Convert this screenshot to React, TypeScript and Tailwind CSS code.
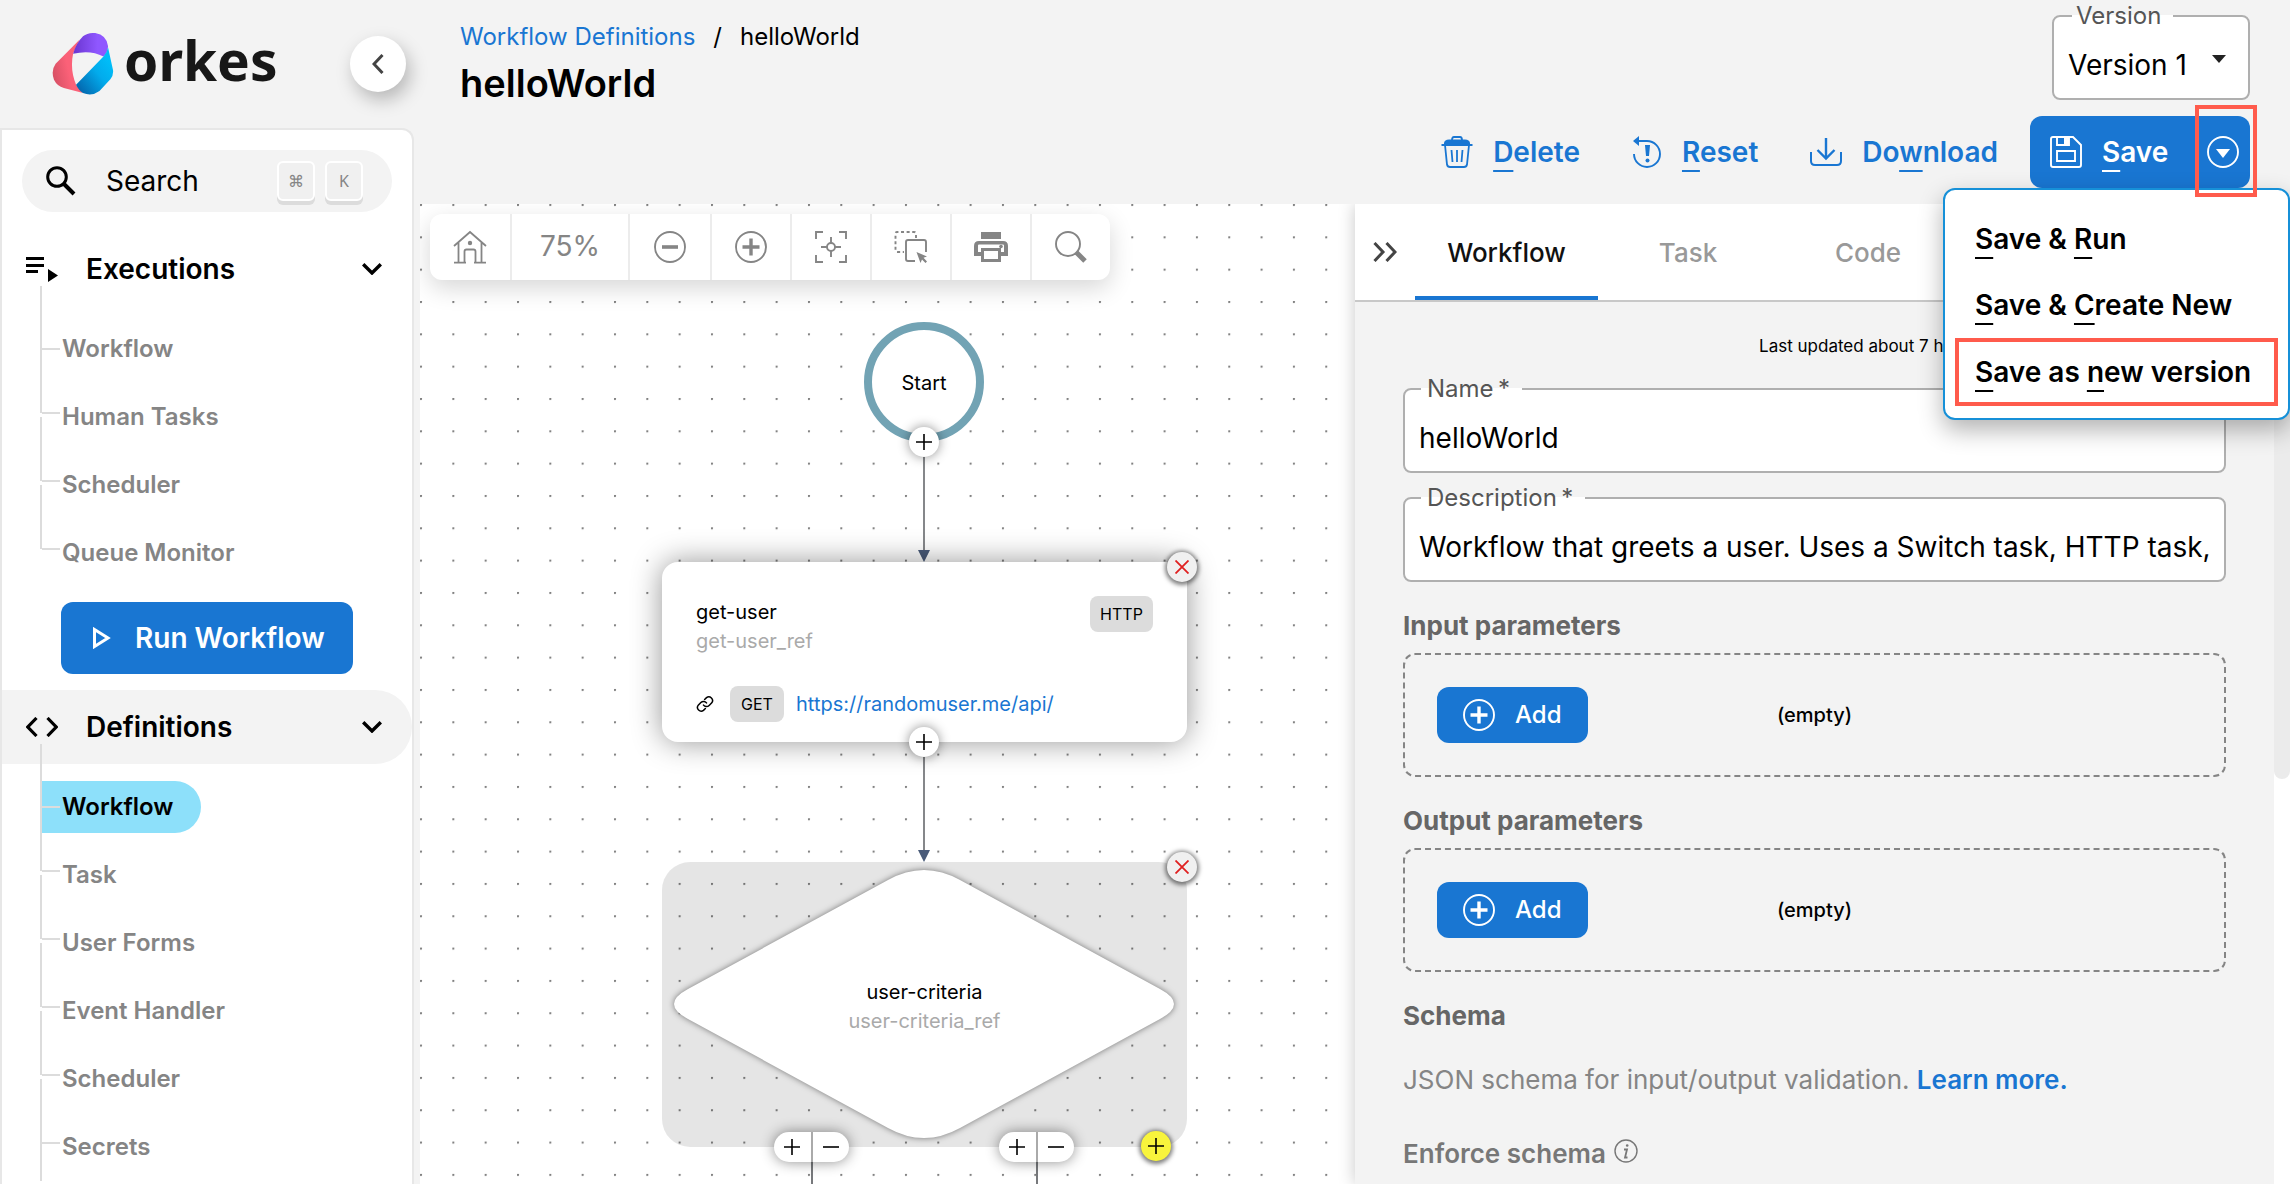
import React from "react";

type IconProps = { className?: string };

/* ---------- icons ---------- */

function OrkesMark() {
  return (
    <svg viewBox="35 38 186 188" className="h-[62px] w-[62px] shrink-0" aria-hidden="true">
      <defs>
        <linearGradient id="markRed" x1="0" y1="1" x2="1" y2="0.6">
          <stop offset="0" stopColor="#cf4c60" />
          <stop offset="0.6" stopColor="#fb6178" />
        </linearGradient>
        <linearGradient id="markPurple" x1="0" y1="0" x2="1" y2="0">
          <stop offset="0" stopColor="#6a35d0" />
          <stop offset="0.7" stopColor="#8f57ff" />
        </linearGradient>
        <linearGradient id="markBlue" x1="0.2" y1="1" x2="0.9" y2="0.3">
          <stop offset="0" stopColor="#0369b0" />
          <stop offset="0.6" stopColor="#02abec" />
          <stop offset="1" stopColor="#00bdf8" />
        </linearGradient>
      </defs>
      <path d="M118 58L45 131Q30 152 40 180Q50 200 70 205L128 220L107 195Q88 150 98 100Z" fill="url(#markRed)" />
      <path d="M98 101Q108 68 128 48Q142 37 165 38Q200 44 204 78Q203 98 190 109Q150 88 98 101Z" fill="url(#markPurple)" />
      <path d="M204 82L219 150Q221 166 211 178L178 214Q155 231 128 220Q115 212 107 195L190 109Q201 98 204 82Z" fill="url(#markBlue)" />
    </svg>
  );
}

function SearchIcon({ className }: IconProps) {
  return (
    <svg viewBox="0 0 30 30" className={className} fill="none" stroke="currentColor" aria-hidden="true">
      <circle cx="11" cy="11" r="9.3" strokeWidth="3" />
      <path d="M17.5 17.5L28 28" strokeWidth="4" />
    </svg>
  );
}

function ChevronDown() {
  return (
    <svg viewBox="0 0 20 12" className="h-3 w-5" fill="none" stroke="currentColor" strokeWidth="3.4" aria-hidden="true">
      <path d="M1.2 1.2L10 10L18.8 1.2" />
    </svg>
  );
}

function ExecutionsIcon() {
  return (
    <svg viewBox="0 0 32 26" className="h-[26px] w-8" aria-hidden="true">
      <path d="M0 1h18v3H0zM0 8h18v3H0zM0 14h12v3H0zM22 13l10 6.5L22 26z" fill="currentColor" />
    </svg>
  );
}

function CodeIcon() {
  return (
    <svg viewBox="0 0 32 20" className="h-5 w-8" fill="none" stroke="currentColor" strokeWidth="3.2" aria-hidden="true">
      <path d="M10.5 1L1.8 10L10.5 19M21.5 1L30.2 10L21.5 19" />
    </svg>
  );
}

function HomeIcon() {
  return (
    <svg viewBox="0 0 34 34" className="h-[34px] w-[34px]" fill="none" stroke="currentColor" strokeWidth="1.8" aria-hidden="true">
      <path d="M1 16L17 2L33 16M5.5 12.5V32M28.5 12.5V32M1 32.6H13M21 32.6H33M11.5 32.6V21.5Q11.5 19.5 13.5 19.5H20.5Q22.5 19.5 22.5 21.5V32.6" />
      <circle cx="17" cy="13" r="2.2" fill="currentColor" stroke="none" />
    </svg>
  );
}

function ZoomOutIcon() {
  return (
    <svg viewBox="0 0 32 32" className="h-8 w-8" fill="none" stroke="currentColor" aria-hidden="true">
      <circle cx="16" cy="16" r="15" strokeWidth="1.9" />
      <path d="M8 16H24" strokeWidth="3.6" />
    </svg>
  );
}

function PlusCircleIcon() {
  return (
    <svg viewBox="0 0 32 32" className="h-8 w-8" fill="none" stroke="currentColor" aria-hidden="true">
      <circle cx="16" cy="16" r="15" strokeWidth="1.9" />
      <path d="M7.5 16H24.5M16 7.5V24.5" strokeWidth="3.4" />
    </svg>
  );
}

function FocusIcon() {
  return (
    <svg viewBox="0 0 32 32" className="h-8 w-8" fill="none" stroke="currentColor" strokeWidth="1.9" aria-hidden="true">
      <path d="M1 8V1H8M24 1H31V8M31 24V31H24M8 31H1V24M16 6V12M16 20V26M6 16H12M20 16H26" />
      <circle cx="16" cy="16" r="4" />
    </svg>
  );
}

function SelectAreaIcon() {
  return (
    <svg viewBox="0 0 34 34" className="h-[34px] w-[34px]" fill="none" stroke="currentColor" strokeWidth="1.9" aria-hidden="true">
      <path d="M22 8V4Q22 2 20 2H3Q1.500 2 1.500 4V20Q1.500 22 3.500 22H10" strokeDasharray="3 2.600" />
      <path d="M21 31H14Q12 31 12 29V12Q12 10 14 10H30Q32 10 32 12V22" />
      <path d="M22.500 22L33 26.500L29.500 27.800L33 31.500L31.500 33L28 29.500L26.500 33Z" fill="currentColor" stroke="none" />
    </svg>
  );
}

function PrintIcon() {
  return (
    <svg viewBox="0 0 34 32" className="h-8 w-[34px]" aria-hidden="true">
      <path
        fill="currentColor"
        fillRule="evenodd"
        d="M7 1H27V8H7ZM5 10H29Q34 10 34 15V25H27V31H7V25H0V15Q0 10 5 10ZM10 20V28H24V20ZM4 21H7V17H27V21H30V14.500Q30 13.500 29 13.500H5Q4 13.500 4 14.500Z"
      />
      <circle cx="27" cy="15.500" r="1.800" fill="currentColor" />
    </svg>
  );
}

function MagnifierIcon() {
  return (
    <svg viewBox="0 0 32 32" className="h-8 w-8" fill="none" stroke="currentColor" aria-hidden="true">
      <circle cx="13" cy="13" r="12" strokeWidth="1.9" />
      <path d="M21.500 21.500L30 30" strokeWidth="5" />
    </svg>
  );
}

function TrashIcon() {
  return (
    <svg viewBox="0 0 32 32" className="h-8 w-8" fill="none" stroke="currentColor" strokeWidth="1.8" aria-hidden="true">
      <path d="M3 9V7Q3.500 3.500 8 3.500H24Q28.500 3.500 29 7V9.500H3Z" fill="currentColor" stroke="none" />
      <path d="M11 4Q11 1 13 1H19Q21 1 21 4M0.500 9H31.500M4 9L6 28.500Q6.500 31 9 31H23Q25.500 31 26 28.500L28 9M10.500 14L11.500 26M16 14V26M21.500 14L20.500 26" />
    </svg>
  );
}

function ResetIcon() {
  return (
    <svg viewBox="0 0 30 32" className="h-8 w-[30px]" fill="none" stroke="currentColor" aria-hidden="true">
      <path d="M4 5H15A13 13 0 1 1 2 18" strokeWidth="1.9" />
      <path d="M1 5L7 0V10Z" fill="currentColor" stroke="none" />
      <path d="M13 9H18L17 20H14Z" fill="currentColor" stroke="none" />
      <circle cx="15.500" cy="24.500" r="2" fill="currentColor" stroke="none" />
    </svg>
  );
}

function DownloadIcon() {
  return (
    <svg viewBox="0 0 32 32" className="h-8 w-8" fill="none" stroke="currentColor" strokeWidth="2" aria-hidden="true">
      <path d="M1 16V25Q1 29 5 29H27Q31 29 31 25V16" />
      <path d="M16 2V22M7.500 14L16 22.500L24.500 14" strokeWidth="2.400" />
    </svg>
  );
}

function SaveIcon() {
  return (
    <svg viewBox="0 0 32 32" className="h-8 w-8" fill="none" stroke="currentColor" strokeWidth="1.900" aria-hidden="true">
      <path d="M3 1H23L31 9V29Q31 31 29 31H3Q1 31 1 29V3Q1 1 3 1Z" />
      <path d="M7 1V9H19V1M7 15H25V25H7Z" />
      <path d="M14 1H19V9H14Z" fill="currentColor" stroke="none" />
    </svg>
  );
}

function CaretCircleIcon() {
  return (
    <svg viewBox="0 0 32 32" className="h-8 w-8" fill="none" stroke="currentColor" strokeWidth="1.900" aria-hidden="true">
      <circle cx="16" cy="16" r="15" />
      <path d="M9 13H23L16 22Z" fill="currentColor" stroke="none" />
    </svg>
  );
}

function LinkIcon() {
  return (
    <svg viewBox="0 0 24 24" className="h-[18px] w-[18px] shrink-0" fill="none" stroke="currentColor" strokeWidth="2" strokeLinecap="round" aria-hidden="true">
      <path d="M10 13.500a5 5 0 0 0 7.500.5l3.500-3.500a5 5 0 0 0-7-7L11.500 6" />
      <path d="M14 10.500a5 5 0 0 0-7.500-.5L3 13.500a5 5 0 0 0 7 7L12.500 18" />
    </svg>
  );
}

function PlusGlyph() {
  return (
    <svg viewBox="0 0 16 16" className="h-4 w-4" stroke="currentColor" strokeWidth="1.600" aria-hidden="true">
      <path d="M0 8H16M8 0V16" />
    </svg>
  );
}

function MinusGlyph() {
  return (
    <svg viewBox="0 0 16 16" className="h-4 w-4" stroke="currentColor" strokeWidth="1.600" aria-hidden="true">
      <path d="M0 8H16" />
    </svg>
  );
}

/* ---------- sidebar ---------- */

function KeyCap({ children }: { children: React.ReactNode }) {
  return (
    <kbd className="flex h-10 w-[38px] items-center justify-center rounded-md border-2 border-white bg-[#f0f0f0] font-sans text-base text-[#858585] shadow-[0_4px_0_#dcdcdc]">
      {children}
    </kbd>
  );
}

function NavHeader({ icon, label, active }: { icon: React.ReactNode; label: string; active?: boolean }) {
  return (
    <button
      type="button"
      aria-expanded="true"
      className={
        active
          ? "flex h-[74px] w-full shrink-0 items-center rounded-r-full bg-[#f3f3f3] pr-[30px] pl-6 text-[28px] font-semibold"
          : "flex h-[74px] w-full shrink-0 items-center rounded-r-full pr-[30px] pl-6 text-[28px] font-semibold"
      }
    >
      <span className="w-[60px]">{icon}</span>
      <span className="flex-1 text-left">{label}</span>
      <ChevronDown />
    </button>
  );
}

function NavTree({ items, active, open }: { items: string[]; active?: string; open?: boolean }) {
  return (
    <ul className="pt-[9px] pl-[38px]">
      {items.map((item, i) => (
        <li key={item} className="relative flex h-[68px] items-center">
          <span
            className={
              i === 0
                ? "absolute -top-[29px] left-0 h-[64px] w-0.5 bg-[#dcdcdc]"
                : i === items.length - 1 && open
                  ? "absolute -top-[34px] left-0 h-[102px] w-0.5 bg-[#dcdcdc]"
                  : "absolute -top-[34px] left-0 h-16 w-0.5 bg-[#dcdcdc]"
            }
          />
          <a
            href="#"
            className={
              item === active
                ? "ml-0.5 flex h-[52px] items-center rounded-r-full bg-[#8de0fa] pr-7 text-2xl font-semibold text-black"
                : "ml-0.5 flex h-[52px] items-center pr-7 text-2xl font-semibold text-[#858585]"
            }
          >
            <span className={i === 0 ? "mr-0.5 h-0.5 w-[18px] bg-[#dcdcdc]" : "mr-0.5 mb-2 h-0.5 w-[18px] bg-[#dcdcdc]"} />
            {item}
          </a>
        </li>
      ))}
    </ul>
  );
}

function Sidebar() {
  return (
    <aside className="flex w-[414px] shrink-0 flex-col">
      <div className="flex h-32 shrink-0 items-center pr-2 pl-[52px]">
        <a href="#" className="flex items-center gap-2.5 font-['Noto_Sans'] text-[55px] leading-[62px] font-bold text-[#171717]">
          <OrkesMark />
          <span className="pb-2">orkes</span>
        </a>
        <button
          type="button"
          aria-label="Collapse menu"
          className="ml-auto flex h-14 w-14 items-center justify-center rounded-full bg-white text-[#444] shadow-[4px_8px_18px_rgba(0,0,0,0.25)]"
        >
          <svg viewBox="0 0 12 20" className="h-5 w-3" fill="none" stroke="currentColor" strokeWidth="3" aria-hidden="true">
            <path d="M10.500 1L2 10L10.500 19" />
          </svg>
        </button>
      </div>
      <nav className="flex min-h-0 flex-1 flex-col overflow-hidden rounded-tr-xl border-2 border-b-0 border-[#e7e7e7] bg-white pt-5">
        <button
          type="button"
          className="mx-5 flex h-[62px] shrink-0 items-center gap-2.5 rounded-full bg-[#f3f3f3] pr-[29px] pl-6 text-[28px]"
        >
          <SearchIcon className="h-[30px] w-[30px]" />
          <span className="flex-1 pl-5 text-left">Search</span>
          <KeyCap>⌘</KeyCap>
          <KeyCap>K</KeyCap>
        </button>
        <div className="h-5 shrink-0" />
        <NavHeader icon={<ExecutionsIcon />} label="Executions" />
        <NavTree items={["Workflow", "Human Tasks", "Scheduler", "Queue Monitor"]} />
        <button
          type="button"
          className="mt-[15px] mb-4 ml-[59px] flex h-[72px] w-[292px] shrink-0 items-center rounded-xl bg-[#1976d2] pl-8 text-[28px] font-semibold text-white"
        >
          <svg viewBox="0 0 18 22" className="mr-6 h-[22px] w-[18px]" fill="none" stroke="currentColor" strokeWidth="3" aria-hidden="true">
            <path d="M1.500 2.500L15 11L1.500 19.500Z" />
          </svg>
          Run Workflow
        </button>
        <NavHeader icon={<CodeIcon />} label="Definitions" active />
        <NavTree
          items={["Workflow", "Task", "User Forms", "Event Handler", "Scheduler", "Secrets"]}
          active="Workflow"
          open
        />
      </nav>
    </aside>
  );
}

/* ---------- header ---------- */

function Key({ children }: { children: React.ReactNode }) {
  return <span className="underline decoration-2 underline-offset-8 [text-decoration-skip-ink:none]">{children}</span>;
}

function ActionButton({ icon, children }: { icon: React.ReactNode; children: React.ReactNode }) {
  return (
    <button type="button" className="flex items-center gap-5 text-[28px] font-semibold text-[#1976d2]">
      {icon}
      <span>{children}</span>
    </button>
  );
}

function SaveMenu() {
  return (
    <div
      role="menu"
      className="absolute top-full -right-10 z-20 w-[347px] rounded-xl border-2 border-[#1690d8] bg-white px-[10px] pt-4 pb-3 text-[28px] font-semibold shadow-[0_10px_24px_rgba(0,0,0,0.3)]"
    >
      <button type="button" role="menuitem" className="flex h-[66px] w-full items-center px-5">
        <span><Key>S</Key>ave &amp; <Key>R</Key>un</span>
      </button>
      <button type="button" role="menuitem" className="flex h-[66px] w-full items-center px-5">
        <span><Key>S</Key>ave &amp; <Key>C</Key>reate New</span>
      </button>
      <button type="button" role="menuitem" className="flex h-[68px] w-full items-center border-4 border-[#ff5b4c] px-4 whitespace-nowrap">
        <span><Key>S</Key>ave as <Key>n</Key>ew version</span>
      </button>
    </div>
  );
}

function Header() {
  return (
    <header className="flex h-[204px] shrink-0 justify-between pr-10 pl-10">
      <div className="pt-[19px]">
        <nav aria-label="Breadcrumb" className="flex h-9 items-center gap-[18px] text-2xl">
          <a href="#" className="text-[#1976d2]">Workflow Definitions</a>
          <span>/</span>
          <span>helloWorld</span>
        </nav>
        <h1 className="mt-1 text-[38px] leading-[48px] font-semibold">helloWorld</h1>
      </div>
      <div className="flex flex-col items-end">
        <fieldset className="h-[100px] w-[198px] rounded-lg border-2 border-[#afafaf] bg-white px-[14px]">
          <legend className="ml-1 h-8 pr-3 pl-1 text-2xl text-[#555]">
            <label htmlFor="version">Version</label>
          </legend>
          <div className="relative flex h-[66px] items-center">
            <select id="version" className="w-full appearance-none bg-transparent text-[28px]">
              <option>Version 1</option>
            </select>
            <svg viewBox="0 0 14 8" className="pointer-events-none absolute top-[23px] right-2 h-2 w-3.5" aria-hidden="true">
              <path d="M0 0H14L7 8Z" fill="#222" />
            </svg>
          </div>
        </fieldset>
        <div className="mt-4 flex items-center">
          <div className="mr-8 flex items-center gap-[52px]">
            <ActionButton icon={<TrashIcon />}><Key>D</Key>elete</ActionButton>
            <ActionButton icon={<ResetIcon />}><Key>R</Key>eset</ActionButton>
            <ActionButton icon={<DownloadIcon />}>Do<Key>w</Key>nload</ActionButton>
          </div>
          <div className="relative flex h-[72px] w-[220px] rounded-xl bg-[#1976d2] text-white">
            <button type="button" className="flex flex-1 items-center gap-5 pl-5 text-[28px] font-semibold">
              <SaveIcon />
              <span><Key>S</Key>ave</span>
            </button>
            <button type="button" aria-label="More save options" aria-expanded="true" className="flex w-[55px] items-center justify-center border-l border-[#1259a5]">
              <CaretCircleIcon />
            </button>
            <div className="text-black"><SaveMenu /></div>
            <span className="pointer-events-none absolute -top-[11px] -right-[7px] z-30 h-[92px] w-[62px] border-4 border-[#ff5b4c]" />
          </div>
        </div>
      </div>
    </header>
  );
}

/* ---------- canvas ---------- */

function CanvasBackdrop() {
  return (
    <svg className="absolute inset-0 h-full w-full" aria-hidden="true">
      <defs>
        <pattern id="dots" width="32.33" height="32.33" patternUnits="userSpaceOnUse">
          <circle cx="1" cy="1" r="1.1" fill="#777" />
        </pattern>
      </defs>
      <rect width="100%" height="100%" fill="url(#dots)" />
      <g stroke="#85878a" strokeWidth="2">
        <path d="M504 250V350M504 540V650" />
      </g>
      <path d="M498 346H510L504 358ZM498 646H510L504 658Z" fill="#4a5b79" />
    </svg>
  );
}

const nodeButton = "absolute flex h-[30px] w-[30px] items-center justify-center rounded-full";

function RemoveButton({ className, label }: { className: string; label: string }) {
  return (
    <button type="button" aria-label={label} className={className}>
      <svg viewBox="0 0 14 14" className="h-3.5 w-3.5" stroke="#e01f1f" strokeWidth="1.800" aria-hidden="true">
        <path d="M0.500 0.500L13.500 13.500M13.500 0.500L0.500 13.500" />
      </svg>
    </button>
  );
}

function BranchPill({ className }: { className: string }) {
  return (
    <div className={className}>
      <button type="button" aria-label="Add task to branch" className="flex flex-1 items-center justify-center"><PlusGlyph /></button>
      <span className="h-full w-0.5 bg-[#aaa]" />
      <button type="button" aria-label="Remove branch" className="flex flex-1 items-center justify-center"><MinusGlyph /></button>
    </div>
  );
}

function Toolbar() {
  const cell = "flex items-center justify-center border-r-2 border-[#ececec] w-20";
  return (
    <div className="absolute top-[10px] left-[10px] flex h-[66px] rounded-xl bg-white text-[#858585] shadow-[0_8px_24px_rgba(0,0,0,0.16)]">
      <button type="button" aria-label="Home" className="flex w-[82px] items-center justify-center border-r-2 border-[#ececec]"><HomeIcon /></button>
      <span className="flex w-[118px] items-center justify-center border-r-2 border-[#ececec] text-[28px]">75%</span>
      <button type="button" aria-label="Zoom out" className="flex w-[82px] items-center justify-center border-r-2 border-[#ececec]"><ZoomOutIcon /></button>
      <button type="button" aria-label="Zoom in" className={cell}><PlusCircleIcon /></button>
      <button type="button" aria-label="Fit to screen" className={cell}><FocusIcon /></button>
      <button type="button" aria-label="Select area" className={cell}><SelectAreaIcon /></button>
      <button type="button" aria-label="Print" className={cell}><PrintIcon /></button>
      <button type="button" aria-label="Find" className="flex w-[78px] items-center justify-center"><MagnifierIcon /></button>
    </div>
  );
}

function Canvas() {
  return (
    <section aria-label="Workflow diagram" className="relative min-w-0 flex-1 overflow-hidden bg-white text-xl">
      <CanvasBackdrop />

      <div className="absolute top-[118px] left-[444px] flex h-[120px] w-[120px] items-center justify-center rounded-full border-8 border-[#72a3b4] bg-white pt-0.5">
        Start
      </div>
      <button type="button" aria-label="Add task after start" className={`${nodeButton} top-[223px] left-[489px] bg-white shadow-[0_0_12px_rgba(0,0,0,0.45)]`}><PlusGlyph /></button>

      <article className="absolute top-[358px] left-[242px] h-[180px] w-[525px] rounded-2xl bg-white px-[34px] shadow-[0_0_30px_rgba(0,0,0,0.42)]">
        <div className="flex justify-between pt-[34px]">
          <div className="pt-0.5">
            <div className="leading-[29px]">get-user</div>
            <div className="leading-[29px] text-[#aaa]">get-user_ref</div>
          </div>
          <span className="flex h-9 w-[63px] items-center justify-center rounded-lg bg-[#dcdcdc] text-base">HTTP</span>
        </div>
        <div className="mt-[30px] flex items-center">
          <LinkIcon />
          <span className="ml-4 flex h-9 w-[54px] items-center justify-center rounded-lg bg-[#dcdcdc] text-base">GET</span>
          <a href="#" className="ml-3 text-[#1976d2]">https://randomuser.me/api/</a>
        </div>
      </article>
      <RemoveButton label="Remove get-user" className={`${nodeButton} top-[348px] left-[747px] bg-[#f0f0f0] shadow-[0_1px_4px_2px_rgba(0,0,0,0.5)]`} />
      <button type="button" aria-label="Add task after get-user" className={`${nodeButton} top-[523px] left-[489px] bg-white shadow-[0_0_12px_rgba(0,0,0,0.45)]`}><PlusGlyph /></button>

      <div className="absolute top-[658px] left-[242px] h-[285px] w-[525px] rounded-[28px] bg-black/10">
        <svg viewBox="242 658 525 285" className="absolute inset-0 h-full w-full overflow-visible" aria-hidden="true">
          <path
            d="M468 676Q504 656 540 676L740 785Q768 800 740 815L540 924Q504 944 468 924L268 815Q240 800 268 785Z"
            fill="#fff"
            className="drop-shadow-[0_0_3px_rgba(0,0,0,0.5)]"
          />
        </svg>
        <div className="relative flex h-full flex-col items-center justify-center pt-1">
          <div className="leading-[29px]">user-criteria</div>
          <div className="leading-[29px] text-[#aaa]">user-criteria_ref</div>
        </div>
      </div>
      <RemoveButton label="Remove user-criteria" className={`${nodeButton} top-[648px] left-[747px] bg-[#f0f0f0] shadow-[0_1px_4px_2px_rgba(0,0,0,0.5)]`} />

      <span className="absolute top-[958px] bottom-0 left-[391px] w-0.5 bg-[#77797c]" />
      <span className="absolute top-[958px] bottom-0 left-[616px] w-0.5 bg-[#77797c]" />
      <BranchPill className="absolute top-[928px] left-[354px] flex h-[30px] w-[75px] rounded-full bg-white shadow-[0_0_14px_rgba(0,0,0,0.45)]" />
      <BranchPill className="absolute top-[928px] left-[579px] flex h-[30px] w-[75px] rounded-full bg-white shadow-[0_0_14px_rgba(0,0,0,0.45)]" />
      <button type="button" aria-label="Add branch" className={`${nodeButton} top-[927px] left-[721px] bg-[#f8f43c] shadow-[0_1px_4px_2px_rgba(0,0,0,0.5)]`}><PlusGlyph /></button>

      <Toolbar />
    </section>
  );
}

/* ---------- details panel ---------- */

function TextField({ id, label, value }: { id: string; label: string; value: string }) {
  return (
    <fieldset className="h-[100px] min-w-0 rounded-lg border-2 border-[#afafaf] bg-white px-[14px]">
      <legend className="ml-0.5 h-8 pr-3 pl-1.5 text-2xl text-[#555]">
        <label htmlFor={id}>{label}{"\u2009"}*</label>
      </legend>
      <input id={id} type="text" defaultValue={value} className="h-[66px] w-full bg-transparent text-[28px] outline-none" />
    </fieldset>
  );
}

function Parameters({ title }: { title: string }) {
  return (
    <section>
      <h2 className="h-10 text-[26px] leading-10 font-bold text-[#666]">{title}</h2>
      <div className="mt-[7px] grid h-[124px] grid-cols-[1fr_auto_1fr] items-center rounded-xl border-2 border-dashed border-[#858585] px-8">
        <button type="button" className="flex h-14 w-[151px] items-center gap-5 rounded-xl bg-[#1976d2] pl-[26px] text-2xl font-medium text-white">
          <PlusCircleIcon />
          Add
        </button>
        <span className="text-xl font-medium">(empty)</span>
      </div>
    </section>
  );
}

function DetailsPanel() {
  return (
    <section aria-label="Workflow details" className="relative flex min-w-0 flex-1 flex-col bg-[#f3f3f3] shadow-[0_0_16px_rgba(0,0,0,0.22)]">
      <div className="flex h-[98px] shrink-0 border-b-2 border-[#c8c8c8] bg-white">
        <button type="button" aria-label="Collapse panel" className="flex w-[60px] items-center pl-[18px] text-[#444]">
          <svg viewBox="0 0 24 20" className="h-5 w-6" fill="none" stroke="currentColor" strokeWidth="3" aria-hidden="true">
            <path d="M1.500 1L10 10L1.500 19M13.500 1L22 10L13.500 19" />
          </svg>
        </button>
        <div role="tablist" className="flex text-[26px] font-medium text-[#999]">
          <button type="button" role="tab" aria-selected="true" className="w-[183px] border-b-4 border-[#1976d2] pt-1 text-[#111]">Workflow</button>
          <button type="button" role="tab" aria-selected="false" className="w-[180px]">Task</button>
          <button type="button" role="tab" aria-selected="false" className="w-[180px]">Code</button>
        </div>
      </div>
      <div className="flex min-h-0 flex-1">
        <div className="min-w-0 flex-1 overflow-hidden pr-12 pl-12">
          <p className="mt-8 mr-[212px] h-6 text-right text-[17px] leading-6">Last updated about 7 hours ago</p>
          <div className="mt-[15px] flex flex-col gap-[9px]">
            <TextField id="name" label="Name" value="helloWorld" />
            <TextField id="description" label="Description" value="Workflow that greets a user. Uses a Switch task, HTTP task, and a JSON transform." />
          </div>
          <div className="mt-6 flex flex-col gap-6">
            <Parameters title="Input parameters" />
            <Parameters title="Output parameters" />
          </div>
          <h2 className="mt-6 h-10 text-[26px] leading-10 font-bold text-[#666]">Schema</h2>
          <p className="mt-6 h-10 text-[26px] leading-10 text-[#858585]">
            JSON schema for input/output validation.{" "}
            <a href="#" className="font-semibold text-[#1976d2]">Learn more.</a>
          </p>
          <h2 className="mt-[34px] flex h-10 gap-2 text-[26px] leading-10 font-semibold text-[#777]">
            Enforce schema
            <svg viewBox="0 0 24 24" className="mt-[5px] h-6 w-6" fill="none" stroke="currentColor" strokeWidth="1.400" aria-hidden="true">
              <circle cx="12" cy="12" r="11" />
              <path d="M10 10.500H13L11 18.500H13.500" strokeWidth="1.800" />
              <circle cx="13.200" cy="6.500" r="1.300" fill="currentColor" stroke="none" />
            </svg>
          </h2>
        </div>
        <div className="w-4 shrink-0 bg-white">
          <div className="h-[477px] rounded-b-full bg-[#ebebeb]" />
        </div>
      </div>
    </section>
  );
}

export default function App() {
  return (
    <div className="flex h-screen w-full overflow-hidden bg-[#f3f3f3] font-['Inter','Liberation_Sans',sans-serif] text-black">
      <Sidebar />
      <main className="flex min-w-0 flex-1 flex-col pl-1.5">
        <div className="relative z-10"><Header /></div>
        <div className="flex min-h-0 flex-1 overflow-hidden">
          <Canvas />
          <DetailsPanel />
        </div>
      </main>
    </div>
  );
}
